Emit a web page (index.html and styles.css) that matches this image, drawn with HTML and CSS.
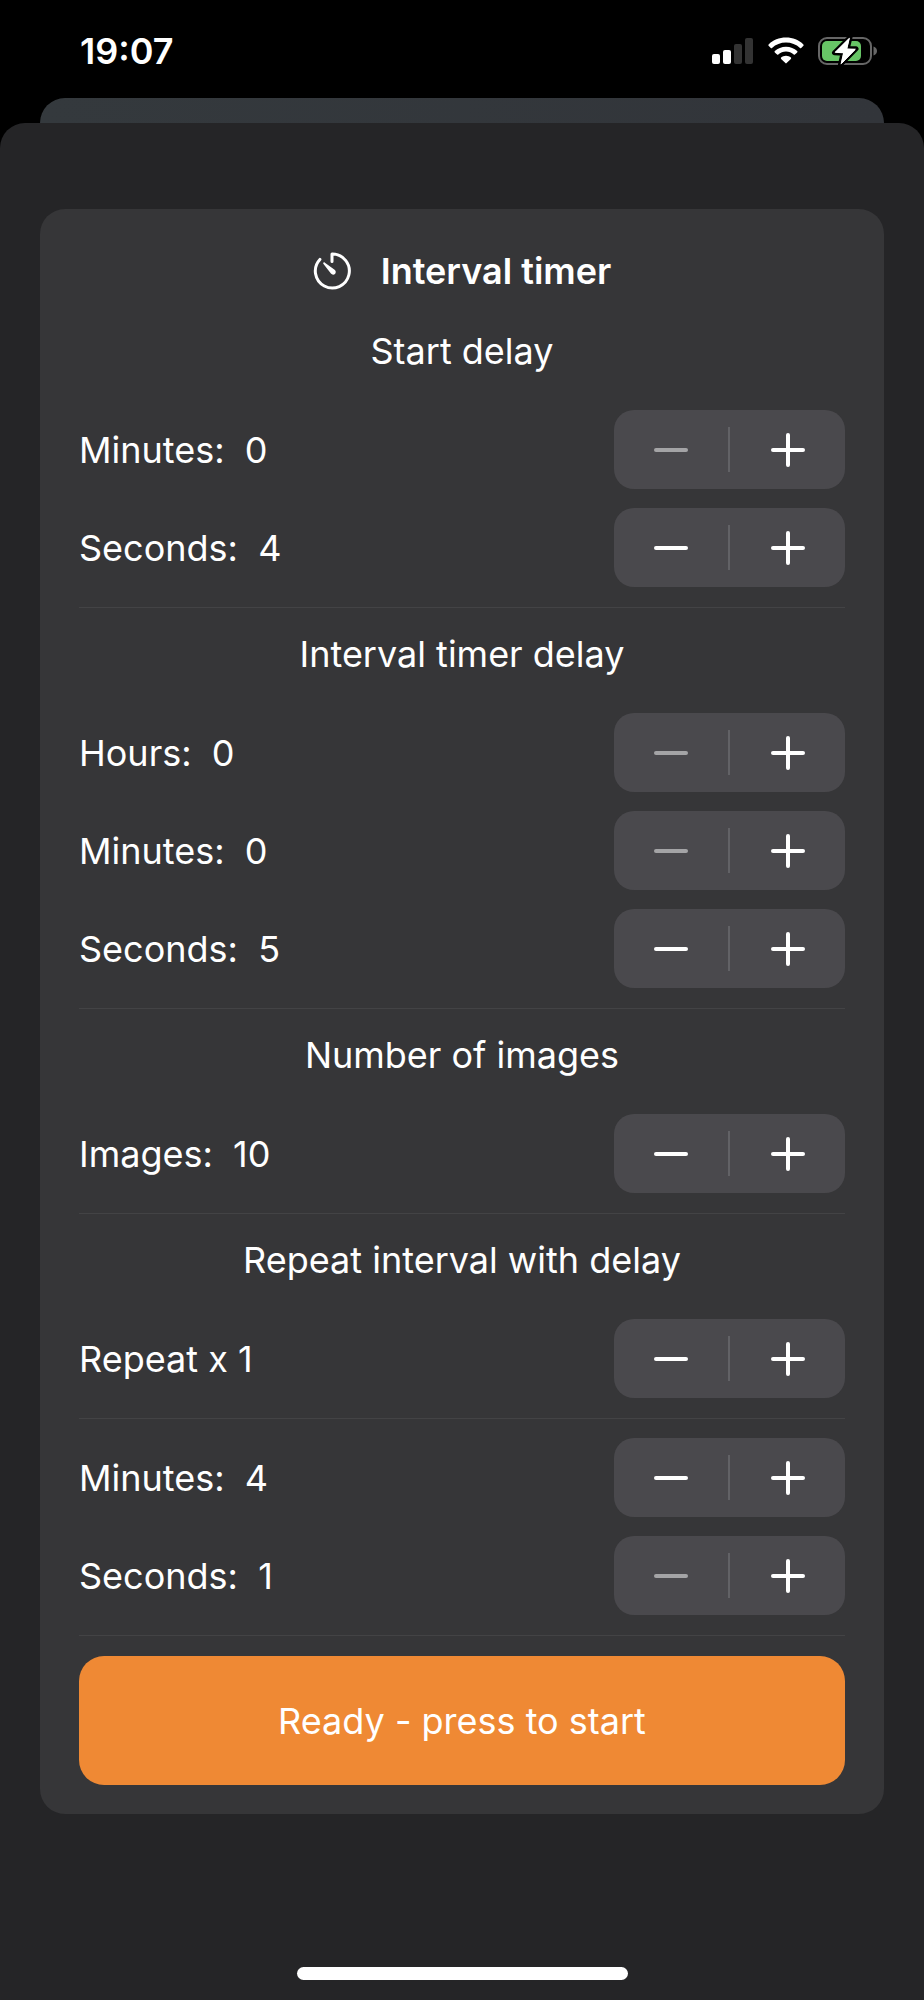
FILE: index.html
```html
<!DOCTYPE html>
<html lang="en">
<head>
    <meta charset="UTF-8">
    <meta name="viewport" content="width=device-width, initial-scale=1.0">
    <title>Interval timer</title>
    <link rel="stylesheet" href="styles.css">
</head>
<body>
    <header class="status-bar">
        <span class="time">19:07</span>
        <div class="status-icons">
            <svg width="42" height="28" viewBox="0 0 42 28" role="img" aria-label="Signal">
                <rect x="0" y="17" width="8" height="10" rx="2" fill="#fff"/>
                <rect x="11" y="13" width="8" height="14" rx="2" fill="#fff"/>
                <rect x="22" y="7" width="8" height="20" rx="2" fill="#333"/>
                <rect x="33" y="1" width="8" height="26" rx="2" fill="#333"/>
            </svg>
            <svg width="36" height="28" viewBox="0 0 36 28" role="img" aria-label="Wi-Fi">
                <path fill="#fff" d="M18 0.5C24.8 0.5 31 3.1 35.4 7.4C35.8 7.8 35.8 8.3 35.4 8.7L33.2 10.9C32.9 11.3 32.3 11.3 32 10.9C28.2 7.4 23.3 5.5 18 5.5C12.7 5.5 7.8 7.4 4 10.9C3.7 11.3 3.1 11.3 2.8 10.9L0.6 8.7C0.2 8.3 0.2 7.8 0.6 7.4C5 3.1 11.2 0.5 18 0.5Z"/>
                <path fill="#fff" d="M18 9.7C22.4 9.7 26.3 11.3 29.2 14.1C29.6 14.4 29.6 15 29.2 15.4L26.9 17.6C26.6 17.9 26.1 17.9 25.7 17.6C23.6 15.7 20.9 14.6 18 14.6C15.1 14.6 12.4 15.7 10.3 17.6C9.9 17.9 9.4 17.9 9.1 17.6L6.8 15.4C6.4 15 6.4 14.4 6.8 14.1C9.7 11.3 13.6 9.7 18 9.7Z"/>
                <path fill="#fff" d="M18 18.7C19.9 18.7 21.6 19.4 22.9 20.6C23.3 20.9 23.3 21.5 22.9 21.9L18.6 26.1C18.3 26.5 17.7 26.5 17.4 26.1L13.1 21.9C12.7 21.5 12.7 20.9 13.1 20.6C14.4 19.4 16.1 18.7 18 18.7Z"/>
            </svg>
            <svg width="60" height="30" viewBox="0 0 60 30" role="img" aria-label="Battery charging">
                <rect x="1" y="2" width="52" height="26" rx="8" fill="none" stroke="#666" stroke-width="2"/>
                <path d="M55.5 10.5C57.8 11.4 59 13 59 15C59 17 57.8 18.6 55.5 19.5Z" fill="#666"/>
                <rect x="4" y="5" width="39" height="20" rx="5" fill="#67c566"/>
                <path d="M32 1.5L16.5 16.8L25 17.2L22.5 28.5L38 12.8L29.3 12.4Z" fill="#fff" stroke="#000" stroke-width="5" stroke-linejoin="round" paint-order="stroke"/>
                <path d="M31 2.5L17.5 16L26 16.4L23.5 27.5L37 13.7L28.5 13.3Z" fill="#fff" stroke="#fff" stroke-width="1" stroke-linejoin="round"/>
            </svg>
        </div>
    </header>

    <div class="back-card"></div>

    <main class="sheet">
        <div class="card">
            <h1 class="title">
                <svg width="38" height="38" viewBox="0 0 38 38" fill="none" aria-hidden="true">
                    <path d="M6.9 7.4A17 17 0 1 0 19 2V9.5" stroke="#fff" stroke-width="3" stroke-linecap="round" stroke-linejoin="round"/>
                    <path d="M10.4 10.7C10.9 10.2 11.4 10.3 11.9 10.7L21.6 17.8C23.1 19 23.1 20.8 22 21.9C20.8 23 19 22.9 17.9 21.5L10.5 12.1C10.1 11.6 10 11.1 10.4 10.7Z" fill="#fff"/>
                </svg>
                Interval timer
            </h1>

            <section class="group">
                <h2>Start delay</h2>
                <div class="row" data-min="0">
                    <span id="startMinutes">Minutes:&nbsp; <output>0</output></span>
                    <div class="stepper" role="group" aria-labelledby="startMinutes">
                        <button class="minus" type="button" aria-label="Decrease" disabled></button>
                        <button class="plus" type="button" aria-label="Increase"></button>
                    </div>
                </div>
                <div class="row" data-min="0">
                    <span id="startSeconds">Seconds:&nbsp; <output>4</output></span>
                    <div class="stepper" role="group" aria-labelledby="startSeconds">
                        <button class="minus" type="button" aria-label="Decrease"></button>
                        <button class="plus" type="button" aria-label="Increase"></button>
                    </div>
                </div>
            </section>

            <section class="group">
                <h2>Interval timer delay</h2>
                <div class="row" data-min="0">
                    <span id="intervalHours">Hours:&nbsp; <output>0</output></span>
                    <div class="stepper" role="group" aria-labelledby="intervalHours">
                        <button class="minus" type="button" aria-label="Decrease" disabled></button>
                        <button class="plus" type="button" aria-label="Increase"></button>
                    </div>
                </div>
                <div class="row" data-min="0">
                    <span id="intervalMinutes">Minutes:&nbsp; <output>0</output></span>
                    <div class="stepper" role="group" aria-labelledby="intervalMinutes">
                        <button class="minus" type="button" aria-label="Decrease" disabled></button>
                        <button class="plus" type="button" aria-label="Increase"></button>
                    </div>
                </div>
                <div class="row" data-min="0">
                    <span id="intervalSeconds">Seconds:&nbsp; <output>5</output></span>
                    <div class="stepper" role="group" aria-labelledby="intervalSeconds">
                        <button class="minus" type="button" aria-label="Decrease"></button>
                        <button class="plus" type="button" aria-label="Increase"></button>
                    </div>
                </div>
            </section>

            <section class="group">
                <h2>Number of images</h2>
                <div class="row" data-min="1">
                    <span id="images">Images:&nbsp; <output>10</output></span>
                    <div class="stepper" role="group" aria-labelledby="images">
                        <button class="minus" type="button" aria-label="Decrease"></button>
                        <button class="plus" type="button" aria-label="Increase"></button>
                    </div>
                </div>
            </section>

            <section class="group">
                <h2>Repeat interval with delay</h2>
                <div class="row" data-min="0">
                    <span id="repeat">Repeat x <output>1</output></span>
                    <div class="stepper" role="group" aria-labelledby="repeat">
                        <button class="minus" type="button" aria-label="Decrease"></button>
                        <button class="plus" type="button" aria-label="Increase"></button>
                    </div>
                </div>
            </section>

            <section class="group no-heading">
                <div class="row" data-min="0">
                    <span id="repeatMinutes">Minutes:&nbsp; <output>4</output></span>
                    <div class="stepper" role="group" aria-labelledby="repeatMinutes">
                        <button class="minus" type="button" aria-label="Decrease"></button>
                        <button class="plus" type="button" aria-label="Increase"></button>
                    </div>
                </div>
                <div class="row" data-min="1">
                    <span id="repeatSeconds">Seconds:&nbsp; <output>1</output></span>
                    <div class="stepper" role="group" aria-labelledby="repeatSeconds">
                        <button class="minus" type="button" aria-label="Decrease" disabled></button>
                        <button class="plus" type="button" aria-label="Increase"></button>
                    </div>
                </div>
            </section>

            <button class="start-btn" type="button">Ready - press to start</button>
        </div>

        <div class="home-indicator"></div>
    </main>

    <script>
        document.querySelectorAll(".row").forEach(function (row) {
            let output = row.querySelector("output");
            let minus = row.querySelector(".minus");
            let min = Number(row.dataset.min);

            function step(amount) {
                let value = Math.max(min, Number(output.textContent) + amount);
                output.textContent = value;
                minus.disabled = value <= min;
            }

            minus.addEventListener("click", function () { step(-1); });
            row.querySelector(".plus").addEventListener("click", function () { step(1); });
        });
    </script>
</body>
</html>
```
FILE: styles.css
```css
* { margin: 0; padding: 0; box-sizing: border-box; }
body {
    display: flex;
    flex-direction: column;
    min-height: 100vh;
    background: #000;
    color: #fff;
    font-family: Inter, "Liberation Sans", sans-serif;
    font-size: 36px;
    line-height: 44px;
}
button { font: inherit; color: inherit; border: none; cursor: pointer; }

.status-bar {
    display: flex;
    justify-content: space-between;
    align-items: center;
    height: 98px;
    padding: 3px 46px 0 80px;
}
.time { font-weight: 600; }
.status-icons { display: flex; align-items: center; gap: 14px; }

/* edge of the screen behind the sheet */
.back-card {
    height: 25px;
    margin: 0 40px;
    border-radius: 25px 25px 0 0;
    background: linear-gradient(90deg, #34393d, #32353a);
}

.sheet {
    flex: 1;
    display: flex;
    flex-direction: column;
    padding: 86px 40px 20px;
    background: #252527;
    border-radius: 25px 25px 0 0;
}
.card {
    padding: 40px 39px 29px;
    background: #363638;
    border-radius: 25px;
}
.title {
    display: flex;
    justify-content: center;
    align-items: center;
    gap: 30px;
    margin-bottom: 12px;
    font-size: 36px;
    font-weight: 600;
}
.group { padding-bottom: 20px; border-bottom: 1px solid #434345; }
.group h2 {
    padding: 24px 0 37px;
    font-size: 36px;
    font-weight: 400;
    text-align: center;
}
.no-heading { padding-top: 19px; }

.row { display: flex; justify-content: space-between; align-items: center; }
.row + .row { margin-top: 19px; }

.stepper {
    display: grid;
    grid-template-columns: 1fr 1fr;
    gap: 3px;
    position: relative;
    width: 231px;
    height: 79px;
    background: #4a494d;
    border-radius: 20px;
}
.stepper::after {
    content: "";
    position: absolute;
    left: 114px;
    top: 17px;
    width: 2px;
    height: 45px;
    background: #626266;
}
.stepper button {
    display: grid;
    place-items: center;
    background: none;
}
.stepper button::before,
.plus::after {
    content: "";
    grid-area: 1 / 1;
    width: 34px;
    height: 4px;
    background: #fff;
    border-radius: 2px;
}
.stepper .plus::after { width: 4px; height: 34px; }
.stepper button:disabled { cursor: default; }
.stepper button:disabled::before { background: #a4a4a6; }

.start-btn {
    display: block;
    width: 100%;
    height: 129px;
    margin-top: 20px;
    background: #ef8934;
    border-radius: 25px;
}

.home-indicator {
    width: 331px;
    height: 13px;
    margin: auto auto 0;
    background: #fff;
    border-radius: 7px;
}
```
